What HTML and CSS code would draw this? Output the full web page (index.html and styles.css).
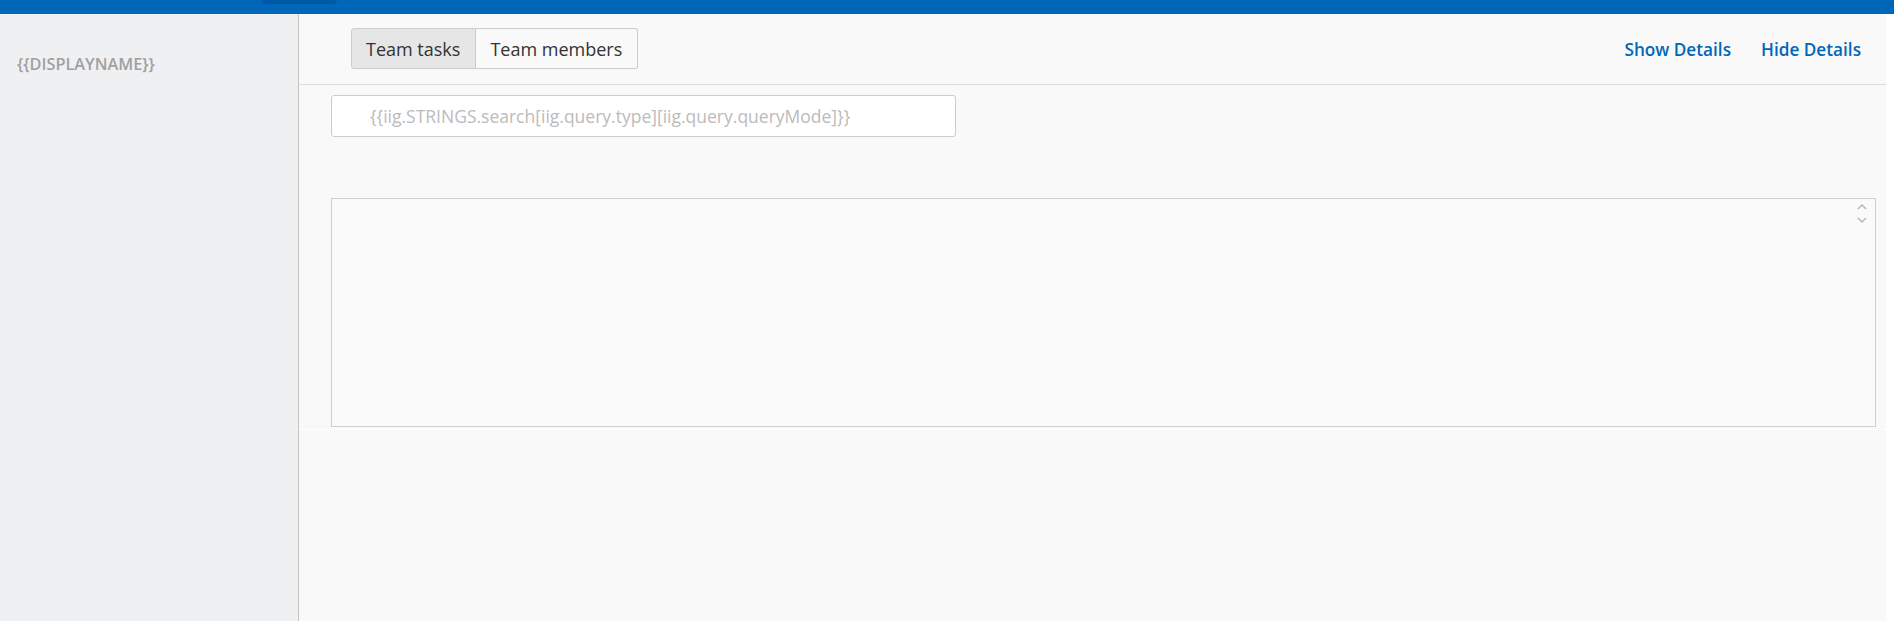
FILE: index.html
```html
<!DOCTYPE html>
<html lang="en">
<head>
    <meta charset="UTF-8">
    <meta name="viewport" content="width=device-width, initial-scale=1.0">
    <title>Team tasks</title>
    <link rel="stylesheet" href="styles.css">
</head>
<body>
    <div class="topbar">
        <span class="topbar-tab"></span>
    </div>
    <div class="layout">
        <aside class="sidebar">
            <div class="display-name">{{DISPLAYNAME}}</div>
        </aside>
        <main class="main">
            <div class="main-header">
                <div class="btn-group">
                    <button class="btn active">Team tasks</button>
                    <button class="btn">Team members</button>
                </div>
                <div class="details-links">
                    <a href="#">Show Details</a>
                    <a href="#">Hide Details</a>
                </div>
            </div>
            <div class="panel">
                <input class="search" type="text" placeholder="{{iig.STRINGS.search[iig.query.type][iig.query.queryMode]}}">
                <div class="results">
                    <div class="scroll-arrows">
                        <svg width="10" height="7" viewBox="0 0 10 7"><path d="M1 6 L5 2 L9 6" fill="none" stroke="#b5b5b5" stroke-width="1.4"/></svg>
                        <svg width="10" height="7" viewBox="0 0 10 7"><path d="M1 1 L5 5 L9 1" fill="none" stroke="#b5b5b5" stroke-width="1.4"/></svg>
                    </div>
                </div>
            </div>
        </main>
    </div>
</body>
</html>
```

FILE: styles.css
```css
/* General styling */
body {
    margin: 0;
    font-family: 'Open Sans', 'Liberation Sans', sans-serif;
    background-color: #ffffff;
    color: #333333;
    height: 621px;
    overflow: hidden;
}

/* Top bar */
.topbar {
    height: 14px;
    background-color: #0067b8;
}

.topbar-tab {
    display: block;
    margin-left: 262px;
    width: 75px;
    height: 4px;
    background-color: #0059a6;
    border-radius: 0 0 4px 4px;
}

.layout {
    display: flex;
    height: 607px;
    margin-right: 8px;
}

/* Sidebar */
.sidebar {
    width: 299px;
    flex-shrink: 0;
    background-color: #eff0f2;
    border-right: 1px solid #c4c4c4;
    padding: 40px 0 0 17px;
    box-sizing: border-box;
}

.display-name {
    font-size: 16.3px;
    font-weight: 600;
    line-height: 20px;
    color: #a0a0a0;
}

/* Main area */
.main {
    flex: 1;
    background-color: #f9f9f9;
}

.main-header {
    display: flex;
    align-items: flex-start;
    justify-content: space-between;
    height: 71px;
    padding: 14px 25px 0 52px;
    box-sizing: border-box;
    border-bottom: 1px solid #dddddd;
}

.btn-group {
    display: flex;
}

.btn {
    height: 41px;
    padding: 0 15px 0 14px;
    font-family: inherit;
    font-size: 18px;
    color: #333333;
    background-color: #f9f9f9;
    border: 1px solid #cccccc;
    cursor: pointer;
}

.btn:first-child {
    border-radius: 3px 0 0 3px;
}

.btn:last-child {
    border-left: none;
    border-radius: 0 3px 3px 0;
}

.btn.active {
    background-color: #e6e6e6;
}

.details-links {
    display: flex;
    gap: 30px;
    padding-top: 10px;
}

.details-links a {
    font-size: 17.2px;
    font-weight: 600;
    line-height: 24px;
    color: #0067b8;
    text-decoration: none;
}

/* Panel with search and results */
.panel {
    height: 345px;
    padding: 10px 10px 0 32px;
    box-sizing: border-box;
    border-bottom: 1px solid #ffffff;
}

.search {
    display: block;
    width: 625px;
    height: 42px;
    box-sizing: border-box;
    padding: 0 0 0 38px;
    font-family: inherit;
    font-size: 17.5px;
    color: #333333;
    background-color: #ffffff;
    border: 1px solid #cccccc;
    border-radius: 3px;
}

.search::placeholder {
    color: #bbbbbb;
}

.results {
    position: relative;
    margin-top: 61px;
    height: 229px;
    box-sizing: border-box;
    border: 1px solid #cfcfcf;
    background-color: #fafafa;
}

.scroll-arrows {
    position: absolute;
    top: 4px;
    right: 8px;
    display: flex;
    flex-direction: column;
    gap: 7px;
}

.scroll-arrows svg {
    display: block;
}
```
